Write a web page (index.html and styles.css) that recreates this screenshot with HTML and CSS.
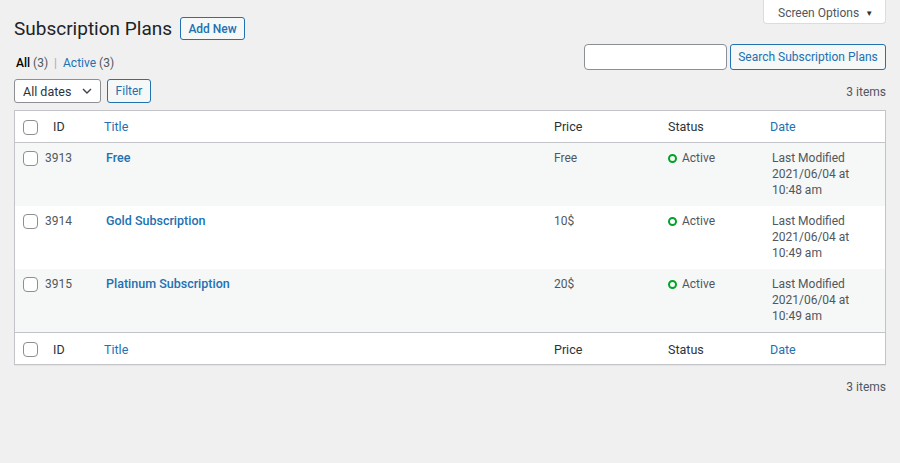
FILE: index.html
```html
<!DOCTYPE html>
<html>
<head>
<meta charset="utf-8">
<link rel="stylesheet" href="styles.css">
</head>
<body>
<div class="wrap">
  <div class="top">
    <div class="heading">
      <h1 class="title">Subscription Plans</h1>
      <a class="btn add-new">Add New</a>
    </div>
    <button class="screen-options">Screen Options <span class="caret">▼</span></button>
  </div>

  <div class="row2">
    <ul class="subsubsub">
      <li><span class="current">All</span> <span class="count">(3)</span></li>
      <li class="sep">|</li>
      <li><a class="link">Active</a> <span class="count">(3)</span></li>
    </ul>
    <div class="search">
      <input class="search-input" type="text">
      <button class="btn search-btn">Search Subscription Plans</button>
    </div>
  </div>

  <div class="tablenav">
    <div class="filters">
      <div class="select">All dates
        <svg class="chev" width="10" height="6" viewBox="0 0 10 6"><path d="M1 1l4 4 4-4" fill="none" stroke="#3c434a" stroke-width="1.4"/></svg>
      </div>
      <button class="btn filter-btn">Filter</button>
    </div>
    <div class="items">3 items</div>
  </div>

  <table class="list">
    <colgroup>
      <col class="c-cb"><col class="c-id"><col class="c-title"><col class="c-price"><col class="c-status"><col class="c-date">
    </colgroup>
    <thead>
      <tr>
        <th class="cb"><span class="checkbox"></span></th>
        <th class="h-id">ID</th>
        <th class="h-link">Title</th>
        <th>Price</th>
        <th>Status</th>
        <th class="h-link">Date</th>
      </tr>
    </thead>
    <tbody>
      <tr class="alt">
        <td class="cb"><span class="checkbox"></span></td>
        <td class="id">3913</td>
        <td class="t"><a class="row-title">Free</a></td>
        <td>Free</td>
        <td><span class="status"><span class="dot"></span>Active</span></td>
        <td class="date">Last Modified<br>2021/06/04 at<br>10:48 am</td>
      </tr>
      <tr>
        <td class="cb"><span class="checkbox"></span></td>
        <td class="id">3914</td>
        <td class="t"><a class="row-title">Gold Subscription</a></td>
        <td>10$</td>
        <td><span class="status"><span class="dot"></span>Active</span></td>
        <td class="date">Last Modified<br>2021/06/04 at<br>10:49 am</td>
      </tr>
      <tr class="alt">
        <td class="cb"><span class="checkbox"></span></td>
        <td class="id">3915</td>
        <td class="t"><a class="row-title">Platinum Subscription</a></td>
        <td>20$</td>
        <td><span class="status"><span class="dot"></span>Active</span></td>
        <td class="date">Last Modified<br>2021/06/04 at<br>10:49 am</td>
      </tr>
    </tbody>
    <tfoot>
      <tr>
        <th class="cb"><span class="checkbox"></span></th>
        <th class="h-id">ID</th>
        <th class="h-link">Title</th>
        <th>Price</th>
        <th>Status</th>
        <th class="h-link">Date</th>
      </tr>
    </tfoot>
  </table>

  <div class="bottomnav">
    <div class="items">3 items</div>
  </div>
</div>
</body>
</html>
```

FILE: styles.css
```css
* { box-sizing: border-box; }
html, body {
  margin: 0;
  padding: 0;
  background: #f0f0f1;
  font-family: Roboto, "Liberation Sans", Arial, sans-serif;
  font-size: 12px;
  color: #3c434a;
}
.wrap {
  padding: 0 14px;
}
.top {
  display: flex;
  justify-content: space-between;
  align-items: flex-start;
}
.heading {
  display: flex;
  align-items: center;
  margin-top: 17px;
  height: 23px;
}
.title {
  margin: 0;
  font-size: 19px;
  font-weight: 400;
  color: #1d2327;
  line-height: 25px;
}
.btn {
  display: inline-flex;
  align-items: center;
  justify-content: center;
  background: #f6f7f7;
  border: 1px solid #2271b1;
  color: #2271b1;
  border-radius: 3px;
  font-family: inherit;
  font-size: 12px;
  padding: 0 7px;
  cursor: pointer;
}
.add-new {
  margin-left: 8px;
  height: 23px;
  width: 65px;
  font-weight: 500;
}
.screen-options {
  width: 123px;
  height: 25px;
  margin-top: -1px;
  background: #fff;
  border: 1px solid #dcdcde;
  border-top: 0;
  border-radius: 0 0 4px 4px;
  font-family: inherit;
  font-size: 12px;
  color: #50575e;
  padding: 3px 0 0 14px;
  text-align: left;
}
.caret {
  font-size: 8px;
  color: #2c3338;
  margin-left: 3px;
  position: relative;
  top: -1px;
}
.row2 {
  display: flex;
  justify-content: space-between;
  align-items: flex-end;
  margin-top: 4px;
}
.subsubsub {
  list-style: none;
  margin: 0 0 -1px 2px;
  padding: 0;
  display: flex;
  gap: 4px;
  line-height: 16px;
  color: #646970;
}
.subsubsub .current {
  color: #000;
  font-weight: 500;
}
.subsubsub .count { color: #50575e; }
.subsubsub .sep { color: #a7aaad; margin: 0 2px; }
.link { color: #2271b1; }
.search {
  display: flex;
  gap: 3px;
}
.search-input {
  width: 143px;
  height: 26px;
  border: 1px solid #8c8f94;
  border-radius: 4px;
  background: #fff;
  margin: 0;
}
.search-btn {
  width: 156px;
  height: 26px;
}
.tablenav {
  display: flex;
  justify-content: space-between;
  align-items: center;
  margin-top: 9px;
  height: 24px;
}
.filters {
  display: flex;
  gap: 6px;
}
.select {
  width: 87px;
  height: 24px;
  border: 1px solid #8c8f94;
  border-radius: 3px;
  background: #fff;
  display: flex;
  align-items: center;
  justify-content: space-between;
  padding: 0 8px 0 8px;
  color: #2c3338;
  font-size: 12.5px;
}
.filter-btn {
  width: 44px;
  height: 24px;
}
.items {
  color: #50575e;
  padding-top: 1px;
}
.list {
  margin-top: 7px;
  width: 100%;
  table-layout: fixed;
  border-collapse: separate;
  border-spacing: 0;
  background: #fff;
  border: 1px solid #c3c4c7;
  box-shadow: 0 1px 1px rgba(0,0,0,.04);
}
.c-cb { width: 30px; }
.c-id { width: 51px; }
.c-title { width: 448px; }
.c-price { width: 114px; }
.c-status { width: 104px; }
.c-date { width: 123px; }
th, td {
  text-align: left;
  vertical-align: top;
  font-weight: 400;
  line-height: 16px;
}
th {
  height: 32px;
  padding: 8px 10px 6px;
  color: #2c3338;
  font-size: 12.5px;
}
thead th { border-bottom: 1px solid #c3c4c7; }
tfoot th { border-top: 1px solid #c3c4c7; padding-top: 9px; }
th.h-id { padding-left: 8px; }
th.h-link { padding-left: 8px; color: #2271b1; }
td {
  padding: 7px 10px 8px;
  color: #50575e;
}
td.id { padding-left: 0; }
tr.alt td { background: #f6f7f7; }
.cb { padding: 0 0 0 8px; }
th.cb { padding-top: 9px; }
td.cb { padding-top: 8px; }
.checkbox {
  display: block;
  width: 15px;
  height: 15px;
  border: 1px solid #8c8f94;
  border-radius: 4px;
  background: #fff;
}
.row-title {
  color: #2271b1;
  font-weight: 500;
  font-size: 12.5px;
}
.status {
  display: inline-flex;
  align-items: center;
}
.dot {
  width: 9px;
  height: 9px;
  border: 2px solid #00a32a;
  border-radius: 50%;
  margin-right: 5px;
}
.bottomnav {
  display: flex;
  justify-content: flex-end;
  margin-top: 14px;
}
```
